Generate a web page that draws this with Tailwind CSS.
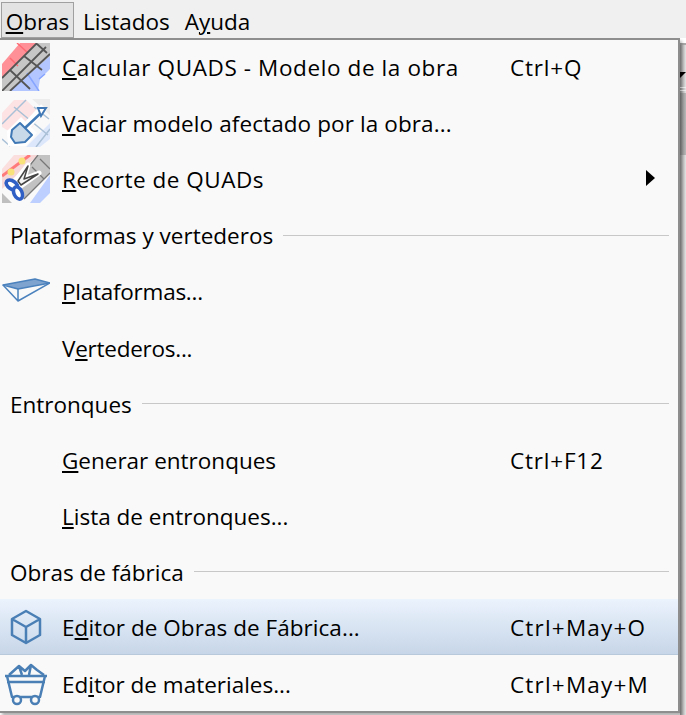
<!DOCTYPE html>
<html lang="es">
<head>
    <meta charset="UTF-8">
    <title>Obras menu</title>
    <script src="https://cdn.jsdelivr.net/npm/@tailwindcss/browser@4"></script>
</head>
<body class="bg-white font-['Open_Sans',sans-serif] text-[22.5px] text-black overflow-hidden">
    <div class="relative w-[686px] h-[715px] overflow-hidden">
        <!-- menu bar -->
        <nav class="h-[38px] bg-[#f0f0f0] flex items-start pt-[2px] pl-[1px]">
            <span class="h-[36px] w-[73px] flex items-center justify-center pt-[3px] bg-[#e3e3e3] border border-[#a0a0a0]"><span><u>O</u>bras</span></span>
            <span class="ml-[9px] h-[36px] pt-[3px] flex items-center">Listados</span>
            <span class="ml-[15px] h-[36px] pt-[3px] flex items-center">A<u>y</u>uda</span>
        </nav>

        <!-- window behind the menu -->
        <div class="absolute left-[680px] top-[43px] w-[6px] h-[672px] bg-gradient-to-r from-[#9a9a9a] to-[#e4e4e4] border-t-2 border-[#a8a8a8]">
            <div class="w-0 h-0 mt-[27px] border-t-[6px] border-t-black border-r-[6px] border-r-transparent"></div>
            <div class="mt-[9px] h-px bg-[#eee]"></div>
            <div class="mt-[2px] h-px bg-[#eee]"></div>
            <div class="h-[62px] mt-[2px] bg-gradient-to-r from-[#8a8a8a] to-[#b8b8b8]"></div>
        </div>

        <!-- dropdown -->
        <div class="relative w-[680px] h-[675px] bg-[#f9f9f9] border-r-2 border-b-2 border-[#8e8e8e] shadow-[inset_0_2px_0_#8e8e8e,2px_3px_3px_rgba(0,0,0,0.3)] flex flex-col">
            <div class="h-[56.1px] pt-[4px] flex items-center">
                <span class="w-[62px] shrink-0 pl-[2px] -mt-[2px]">
                    <svg class="block" width="48" height="48" viewBox="0 0 48 48">
                        <path d="M0 21 L18 0 H35 L0 35Z" fill="#ff9097"/>
                        <path d="M8 48 L48 11 V26 L38 36 L36 48Z" fill="#b3c6ff"/>
                        <path d="M0 35 L35 0 H48 V13 L8 48 H0Z" fill="#c6c6c6"/>
                        <path d="M15 0 L26 10 M8 15 L16 23" stroke="#ff6a73" stroke-width="1.5" fill="none"/>
                        <path d="M25 30 L37 48 M37 36 L43 31" stroke="#86a5ff" stroke-width="1.5" fill="none"/>
                        <path d="M0 35 L35 0 M0 48 L44 4 M8 48 L48 11 M8 27 L28 46 M22 13 L40 27 M35 1 L45 10" stroke="#555" stroke-width="1.8" fill="none"/>
                    </svg>
                </span>
                <span class="w-[448px] tracking-[0.6px]"><u>C</u>alcular QUADS - Modelo de la obra</span>
                <span class="tracking-[0.8px]">Ctrl+Q</span>
            </div>
            <div class="h-[56.1px] pt-[4px] flex items-center">
                <span class="w-[62px] shrink-0 pl-[2px] -mt-[2px]">
                    <svg class="block" width="48" height="48" viewBox="0 0 48 48">
                        <path d="M0 14 L12 1 H24 L40 16 L20 40 L0 28Z" fill="#fde3e3"/>
                        <path d="M24 48 L48 24 V40 L38 48Z" fill="#dde7fb"/>
                        <path d="M30 0 H48 V16 Z" fill="#ececec"/>
                        <path d="M0 25 L24 1 M12 8 L46 36 M0 40 L8 47 M32 8 L47 20 M34 48 L48 30" stroke="#a9c0d6" stroke-width="1.5" fill="none"/>
                        <path d="M5 32 L19 18 L35 34 L24 47 L6 47Z" fill="#fff"/>
                        <path d="M42 8 L22 30" stroke="#fff" stroke-width="8"/>
                        <path d="M39 14 L23 29" stroke="#3f78b5" stroke-width="2.5"/>
                        <path d="M39 17 L36 9 H44Z" fill="#fff" stroke="#3f78b5" stroke-width="2"/>
                        <path d="M10 31 L18 24 L30 36 L23 43 L13 44 L9 38Z" fill="#c8d9ea" stroke="#3f78b5" stroke-width="2" stroke-linejoin="round"/>
                    </svg>
                </span>
                <span class="tracking-[0.1px]"><u>V</u>aciar modelo afectado por la obra...</span>
            </div>
            <div class="h-[56.1px] pt-[4px] flex items-center relative">
                <span class="w-[62px] shrink-0 pl-[2px] -mt-[2px]">
                    <svg class="block" width="48" height="48" viewBox="0 0 48 48">
                        <path d="M0 14 L12 0 H28 L0 21Z" fill="#fbdede"/>
                        <path d="M0 21 L28 0 H36 L0 34Z" fill="#f6d8d8"/>
                        <path d="M0 21 L28 0" stroke="#ff7b7b" stroke-width="3"/>
                        <path d="M14 28 L36 0 H48 V18 L22 44Z" fill="#c2c2c2"/>
                        <path d="M28 48 L48 20 V38 L38 48Z" fill="#bccfff"/>
                        <path d="M0 38 L10 48 H0Z" fill="#bfbfbf"/>
                        <path d="M30 12 L42 24 M38 4 L48 14 M36 0 L14 28 M48 18 L22 44" stroke="#777" stroke-width="1.3" fill="none"/>
                        <circle cx="9" cy="17" r="3.5" fill="#f9e27a"/>
                        <circle cx="20" cy="6" r="3.5" fill="#f9e27a"/>
                        <path d="M26 10 L14 25 L19 31 L37 18 L22 24Z" fill="#fff" stroke="#fff" stroke-width="5" stroke-linejoin="round"/>
                        <path d="M26 11 L16 26 L19 30 L36 19 L22 24Z" fill="#f4f4f4" stroke="#444" stroke-width="1.5" stroke-linejoin="round"/>
                        <ellipse cx="10" cy="30" rx="6.5" ry="4" transform="rotate(35 10 30)" fill="#fff" stroke="#2f5fc4" stroke-width="3.5"/>
                        <ellipse cx="16" cy="38" rx="4" ry="6.5" transform="rotate(-25 16 38)" fill="#fff" stroke="#2f5fc4" stroke-width="3.5"/>
                    </svg>
                </span>
                <span class="tracking-[0.5px]"><u>R</u>ecorte de QUADs</span>
                <span class="absolute left-[646px] top-[20px] w-0 h-0 border-y-[8px] border-y-transparent border-l-[9px] border-l-black"></span>
            </div>
            <div class="h-[56.1px] pt-[4px] flex items-center pl-[10px]">
                <span>Plataformas y vertederos</span>
                <span class="ml-[10px] mr-[9px] -mt-[2px] flex-1 h-px bg-[#c8c8c8]"></span>
            </div>
            <div class="h-[56.1px] pt-[4px] flex items-center">
                <span class="w-[62px] shrink-0 pl-[2px] -mt-[2px]">
                    <svg class="block" width="48" height="30" viewBox="0 0 48 30">
                        <path d="M1 9 L33 3 L48 7 L16 13Z" fill="#7ea3cf" stroke="#4b82bd" stroke-width="1.5" stroke-linejoin="round"/>
                        <path d="M1 9 L16 25 L16 13 M16 25 L48 7" fill="none" stroke="#4b82bd" stroke-width="1.5" stroke-linejoin="round"/>
                    </svg>
                </span>
                <span class="tracking-[-0.25px]"><u>P</u>lataformas...</span>
            </div>
            <div class="h-[56.1px] pt-[4px] flex items-center pl-[62px]"><span class="tracking-[-0.25px]">V<u>e</u>rtederos...</span></div>
            <div class="h-[56.1px] pt-[4px] flex items-center pl-[10px]">
                <span>Entronques</span>
                <span class="ml-[10px] mr-[9px] -mt-[2px] flex-1 h-px bg-[#c8c8c8]"></span>
            </div>
            <div class="h-[56.1px] pt-[4px] flex items-center pl-[62px]">
                <span class="w-[448px]"><u>G</u>enerar entronques</span>
                <span class="tracking-[0.8px]">Ctrl+F12</span>
            </div>
            <div class="h-[56.1px] pt-[4px] flex items-center pl-[62px]"><span><u>L</u>ista de entronques...</span></div>
            <div class="h-[56.1px] pt-[4px] flex items-center pl-[10px]">
                <span>Obras de fábrica</span>
                <span class="ml-[10px] mr-[9px] -mt-[2px] flex-1 h-px bg-[#c8c8c8]"></span>
            </div>
            <div class="h-[56.1px] pt-[4px] flex items-center bg-gradient-to-b from-[#ebf3fd] to-[#c7d6e8] border-b border-[#b8c9dc]">
                <span class="w-[62px] shrink-0 pl-[8px] -mt-[2px]">
                    <svg class="block" width="36" height="36" viewBox="0 0 36 36">
                        <path d="M18 2 L32 10 V26 L18 34 L4 26 V10Z M4 10 L18 18 L32 10 M18 18 V34" fill="none" stroke="#4a7fb5" stroke-width="2.5" stroke-linejoin="round"/>
                    </svg>
                </span>
                <span class="w-[448px] tracking-[0.05px]">E<u>d</u>itor de Obras de Fábrica...</span>
                <span class="tracking-[1.2px]">Ctrl+May+O</span>
            </div>
            <div class="h-[56.1px] pt-[4px] flex items-center">
                <span class="w-[62px] shrink-0 pl-[4px] -mt-[2px]">
                    <svg class="block" width="44" height="44" viewBox="0 0 44 44">
                        <path d="M5 13 L15 4 L21 9 L27 3 L33 8 L40 13 M15 4 L18 13 M27 3 L25 13" fill="none" stroke="#4a7fb5" stroke-width="2.5" stroke-linejoin="round"/>
                        <path d="M1 14 H43 M3 20 H41 M3 14 L8 35 H36 L41 14" fill="none" stroke="#4a7fb5" stroke-width="2.5" stroke-linejoin="round"/>
                        <circle cx="13" cy="38" r="4" fill="#f9f9f9" stroke="#4a7fb5" stroke-width="2.5"/>
                        <circle cx="31" cy="38" r="4" fill="#f9f9f9" stroke="#4a7fb5" stroke-width="2.5"/>
                    </svg>
                </span>
                <span class="w-[448px]">Ed<u>i</u>tor de materiales...</span>
                <span class="tracking-[1.2px]">Ctrl+May+M</span>
            </div>
        </div>
    </div>
</body>
</html>
